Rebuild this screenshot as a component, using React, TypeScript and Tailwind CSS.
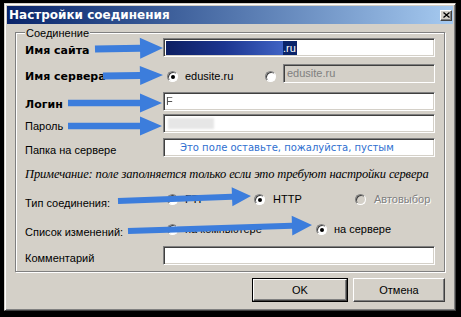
import React from "react";

function arrowPts(x1: number, y1: number, x2: number, y2: number, sh: number, hl: number, hh: number) {
  const dx = x2 - x1;
  const dy = y2 - y1;
  const L = Math.hypot(dx, dy);
  const ux = dx / L;
  const uy = dy / L;
  const nx = -uy;
  const ny = ux;
  const bx = x2 - ux * hl;
  const by = y2 - uy * hl;
  const pts = [
    [x1 + nx * sh, y1 + ny * sh],
    [bx + nx * sh, by + ny * sh],
    [bx + nx * hh, by + ny * hh],
    [x2, y2],
    [bx - nx * hh, by - ny * hh],
    [bx - nx * sh, by - ny * sh],
    [x1 - nx * sh, y1 - ny * sh],
  ];
  return pts.map((p) => `${p[0].toFixed(1)},${p[1].toFixed(1)}`).join(" ");
}

const arrows = [
  [95, 49, 163, 48, 3.5, 23, 10.5],
  [103, 76, 163, 75, 3.5, 23, 9.5],
  [68, 103, 162, 103, 3.2, 22, 9.5],
  [68, 126, 162, 126, 3.2, 22, 9.5],
  [118, 201, 251, 196, 3, 19, 9.5],
  [128, 231, 312, 225, 3, 20, 10],
];

function Radio({ checked, disabled }: { checked?: boolean; disabled?: boolean }) {
  return (
    <span
      className={`inline-flex h-[11px] w-[11px] shrink-0 items-center justify-center rounded-full border border-t-[#808080] border-l-[#808080] border-r-white border-b-white shadow-[inset_1px_1px_0_#404040] ${
        disabled ? "bg-[#d4d0c8]" : "bg-white"
      }`}
    >
      {checked && <span className="h-[4px] w-[4px] rounded-full bg-black" />}
    </span>
  );
}

const sunken =
  "border border-t-[#808080] border-l-[#808080] border-b-white border-r-white shadow-[inset_1px_1px_0_#404040,inset_-1px_-1px_0_#d4d0c8]";

export default function App() {
  return (
    <div className="relative h-[317px] w-[461px] overflow-hidden bg-black pl-[4px] pt-[3px] font-['Liberation_Sans',Arial,sans-serif] text-[11px] leading-[13px] text-black">
      <div className="flex h-[308px] w-[452px] flex-col border border-t-[#d4d0c8] border-l-[#d4d0c8] border-r-[#404040] border-b-[#404040] bg-[#d4d0c8] p-[2px] shadow-[inset_1px_1px_0_#fff,inset_-1px_-1px_0_#808080]">
        {/* title bar */}
        <div className="flex h-[18px] items-center justify-between bg-linear-to-r from-[#0a246a] to-[#a6caf0] pl-[2px]">
          <span className="font-['DejaVu_Sans',sans-serif] text-[12px] font-bold leading-[14px] text-white">
            Настройки соединения
          </span>
          <span className="mr-[1px] flex h-[11px] w-[12px] items-center justify-center border border-t-white border-l-white border-r-[#404040] border-b-[#404040] bg-[#d4d0c8] shadow-[inset_-1px_-1px_0_#808080]">
            <svg width="7" height="6" viewBox="0 0 7 6">
              <path d="M0.5 0.5 L6.5 5.5 M6.5 0.5 L0.5 5.5" stroke="#000" strokeWidth="1.3" />
            </svg>
          </span>
        </div>

        {/* group box */}
        <div className="relative ml-[8px] mt-[8px] h-[240px] w-[430px] border border-[#808080] pl-[9px] pr-[9px] shadow-[inset_1px_1px_0_#fff,1px_1px_0_#fff]">
          <span className="absolute -top-[6px] left-[9px] bg-[#d4d0c8] px-[1px]">Соединение</span>

          {/* site */}
          <div className="mt-[5px] flex h-[19px] items-start">
            <span className="w-[138px] pt-[6px] font-['DejaVu_Sans',sans-serif] font-bold">Имя сайта</span>
            <div className={`flex h-[19px] w-[272px] items-center bg-white pl-[2px] ${sunken}`}>
              <span className="h-[14px] w-[117px] bg-linear-to-r from-[#0d1f62] via-[#1c3590] to-[#4063c4] blur-[0.5px]" />
              <span className="h-[14px] bg-[#0a246a] pr-[1px] leading-[14px] text-white">.ru</span>
            </div>
          </div>

          {/* server */}
          <div className="mt-[7px] flex h-[19px] items-start">
            <span className="w-[138px] pt-[6px] font-['DejaVu_Sans',sans-serif] font-bold">Имя сервера</span>
            <div className="flex h-[19px] w-[272px] items-center justify-between">
              <div className="ml-[4px] mt-[6px] flex items-center gap-[7px]">
                <Radio checked />
                <span>edusite.ru</span>
              </div>
              <div className="flex items-center gap-[7px]">
                <span className="mt-[6px] flex">
                  <Radio />
                </span>
                <div className={`flex h-[19px] w-[152px] items-center bg-[#d4d0c8] pl-[3px] text-[#808080] ${sunken}`}>
                  edusite.ru
                </div>
              </div>
            </div>
          </div>

          {/* login */}
          <div className="mt-[9px] flex h-[19px] items-start">
            <span className="w-[138px] pt-[6px] font-['DejaVu_Sans',sans-serif] font-bold">Логин</span>
            <div className={`flex h-[19px] w-[272px] items-center bg-white pl-[2px] text-[#555] ${sunken}`}>
              <span className="blur-[0.4px]">F</span>
            </div>
          </div>

          {/* password */}
          <div className="mt-[3px] flex h-[19px] items-start">
            <span className="w-[138px] pt-[6px]">Пароль</span>
            <div className={`flex h-[19px] w-[272px] items-center bg-white pl-[4px] ${sunken}`}>
              <span className="h-[11px] w-[46px] bg-[#e6e6e6] blur-[1px]" />
            </div>
          </div>

          {/* folder */}
          <div className="mt-[5px] flex h-[19px] items-start">
            <span className="w-[138px] pt-[6px]">Папка на сервере</span>
            <div className={`flex h-[19px] w-[272px] items-center bg-white pl-[16px] font-['DejaVu_Sans',sans-serif] text-[10px] text-[#2f6fd0] ${sunken}`}>
              Это поле оставьте, пожалуйста, пустым
            </div>
          </div>

          {/* note */}
          <div className="mt-[9px] flex h-[17px] items-center">
            <span className="whitespace-nowrap font-['Liberation_Serif',serif] text-[12.5px] italic leading-[15px] tracking-[-0.15px]">
              Примечание: поле заполняется только если это требуют настройки сервера
            </span>
          </div>

          {/* type */}
          <div className="mt-[7px] flex h-[19px] items-start">
            <span className="w-[138px] pt-[7px]">Тип соединения:</span>
            <div className="ml-[4px] flex h-[19px] items-center">
              <div className="flex w-[87px] items-center gap-[7px]">
                <Radio />
                <span>FTP</span>
              </div>
              <div className="flex w-[101px] items-center gap-[8px]">
                <Radio checked />
                <span>HTTP</span>
              </div>
              <div className="flex items-center gap-[8px] text-[#808080]">
                <Radio disabled />
                <span className="[text-shadow:1px_1px_0_#fff]">Автовыбор</span>
              </div>
            </div>
          </div>

          {/* list */}
          <div className="mt-[11px] flex h-[19px] items-start">
            <span className="w-[138px] pt-[6px]">Список изменений:</span>
            <div className="ml-[4px] flex h-[19px] items-center">
              <div className="flex w-[149px] items-center gap-[7px]">
                <Radio />
                <span>на компьютере</span>
              </div>
              <div className="flex items-center gap-[7px]">
                <Radio checked />
                <span>на сервере</span>
              </div>
            </div>
          </div>

          {/* comment */}
          <div className="mt-[7px] flex h-[19px] items-start">
            <span className="w-[138px] pt-[6px]">Комментарий</span>
            <div className={`h-[19px] w-[272px] bg-white ${sunken}`} />
          </div>
        </div>

        {/* buttons */}
        <div className="mt-[6px] flex justify-end gap-[5px] pr-[8px]">
          <div className="h-[24px] w-[96px] border border-black">
            <div className="flex h-full w-full items-center justify-center border border-t-white border-l-white border-r-[#404040] border-b-[#404040] shadow-[inset_-1px_-1px_0_#808080]">
              OK
            </div>
          </div>
          <div className="flex h-[24px] w-[92px] items-center justify-center border border-t-white border-l-white border-r-[#404040] border-b-[#404040] shadow-[inset_-1px_-1px_0_#808080]">
            Отмена
          </div>
        </div>
      </div>

      <svg className="pointer-events-none absolute left-0 top-0" width="461" height="317" viewBox="0 0 461 317">
        {arrows.map((a, i) => (
          <polygon key={i} points={arrowPts(a[0], a[1], a[2], a[3], a[4], a[5], a[6])} fill="#3c7ddc" />
        ))}
      </svg>
    </div>
  );
}
